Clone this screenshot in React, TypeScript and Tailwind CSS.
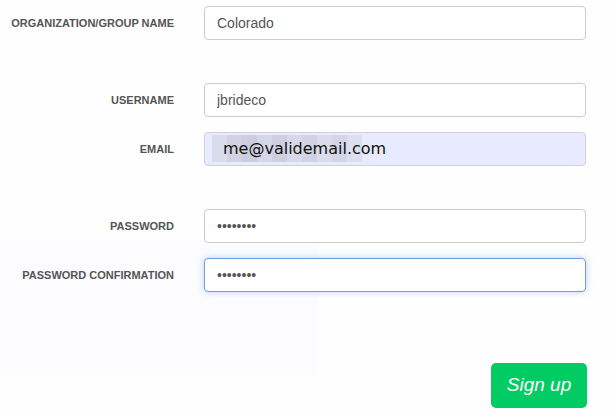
import React from "react"

const labelCls = "w-[174px] shrink-0 text-right text-[11px] font-bold text-[#555]"
const inputCls =
  "w-[382px] h-[34px] rounded-[4px] border border-[#ccc] bg-white px-3 text-[14px] text-[#555] outline-none"

function Row({ label, children, className = "" }: { label: string; children: React.ReactNode; className?: string }) {
  return (
    <div className={`flex items-center gap-[30px] ${className}`}>
      <label className={labelCls}>{label}</label>
      {children}
    </div>
  )
}

const blurShades = ["#d6d7e6", "#c9cadb", "#c3c4d6", "#cfd0e0", "#c6c7d8", "#d2d3e3", "#c9cadb", "#d6d7e6", "#cdcede", "#dadbe9"]

export default function App() {
  return (
    <div
      className="relative w-[613px] h-[416px] bg-[#fefefe] overflow-hidden"
      style={{ fontFamily: '"Liberation Sans", Arial, sans-serif' }}
    >
      <div className="absolute left-0 top-[240px] w-[318px] h-[136px] bg-[#f9fafd] opacity-50" />

      <form className="relative flex flex-col pt-[6px]">
        <Row label="ORGANIZATION/GROUP NAME">
          <input className={inputCls} defaultValue="Colorado" />
        </Row>

        <Row label="USERNAME" className="mt-[43px]">
          <input className={inputCls} defaultValue="jbrideco" />
        </Row>

        <Row label="EMAIL" className="mt-[15px]">
          <div className="relative w-[382px] h-[34px] rounded-[4px] border border-[#cfd0dc] bg-[#e8eafd]">
            <div className="absolute left-[7px] top-[2px] flex h-[27px]">
              {blurShades.map((c, i) => (
                <div key={i} className="w-[15px] h-full" style={{ backgroundColor: c, opacity: 0.75 }} />
              ))}
            </div>
            <span
              className="absolute left-[18px] top-[6px] text-[16px] leading-[20px] text-[#111]"
              style={{ fontFamily: '"DejaVu Sans", sans-serif' }}
            >
              me@validemail.com
            </span>
          </div>
        </Row>

        <Row label="PASSWORD" className="mt-[43px]">
          <input type="password" className={inputCls} defaultValue="abcdefgh" />
        </Row>

        <Row label="PASSWORD CONFIRMATION" className="mt-[15px]">
          <input
            type="password"
            autoFocus
            className="w-[382px] h-[34px] rounded-[4px] border border-[#6f9be8] bg-white px-3 text-[14px] text-[#555] outline-none shadow-[0_0_7px_rgba(102,155,233,0.45)] caret-[#222]"
            defaultValue="abcdefgh"
          />
        </Row>

        <div className="flex justify-end pr-[26px] mt-[71px]">
          <button
            type="button"
            className="w-[96px] h-[45px] rounded-[5px] bg-[#00cc63] text-white text-[19px] italic"
          >
            Sign up
          </button>
        </div>
      </form>
    </div>
  )
}
